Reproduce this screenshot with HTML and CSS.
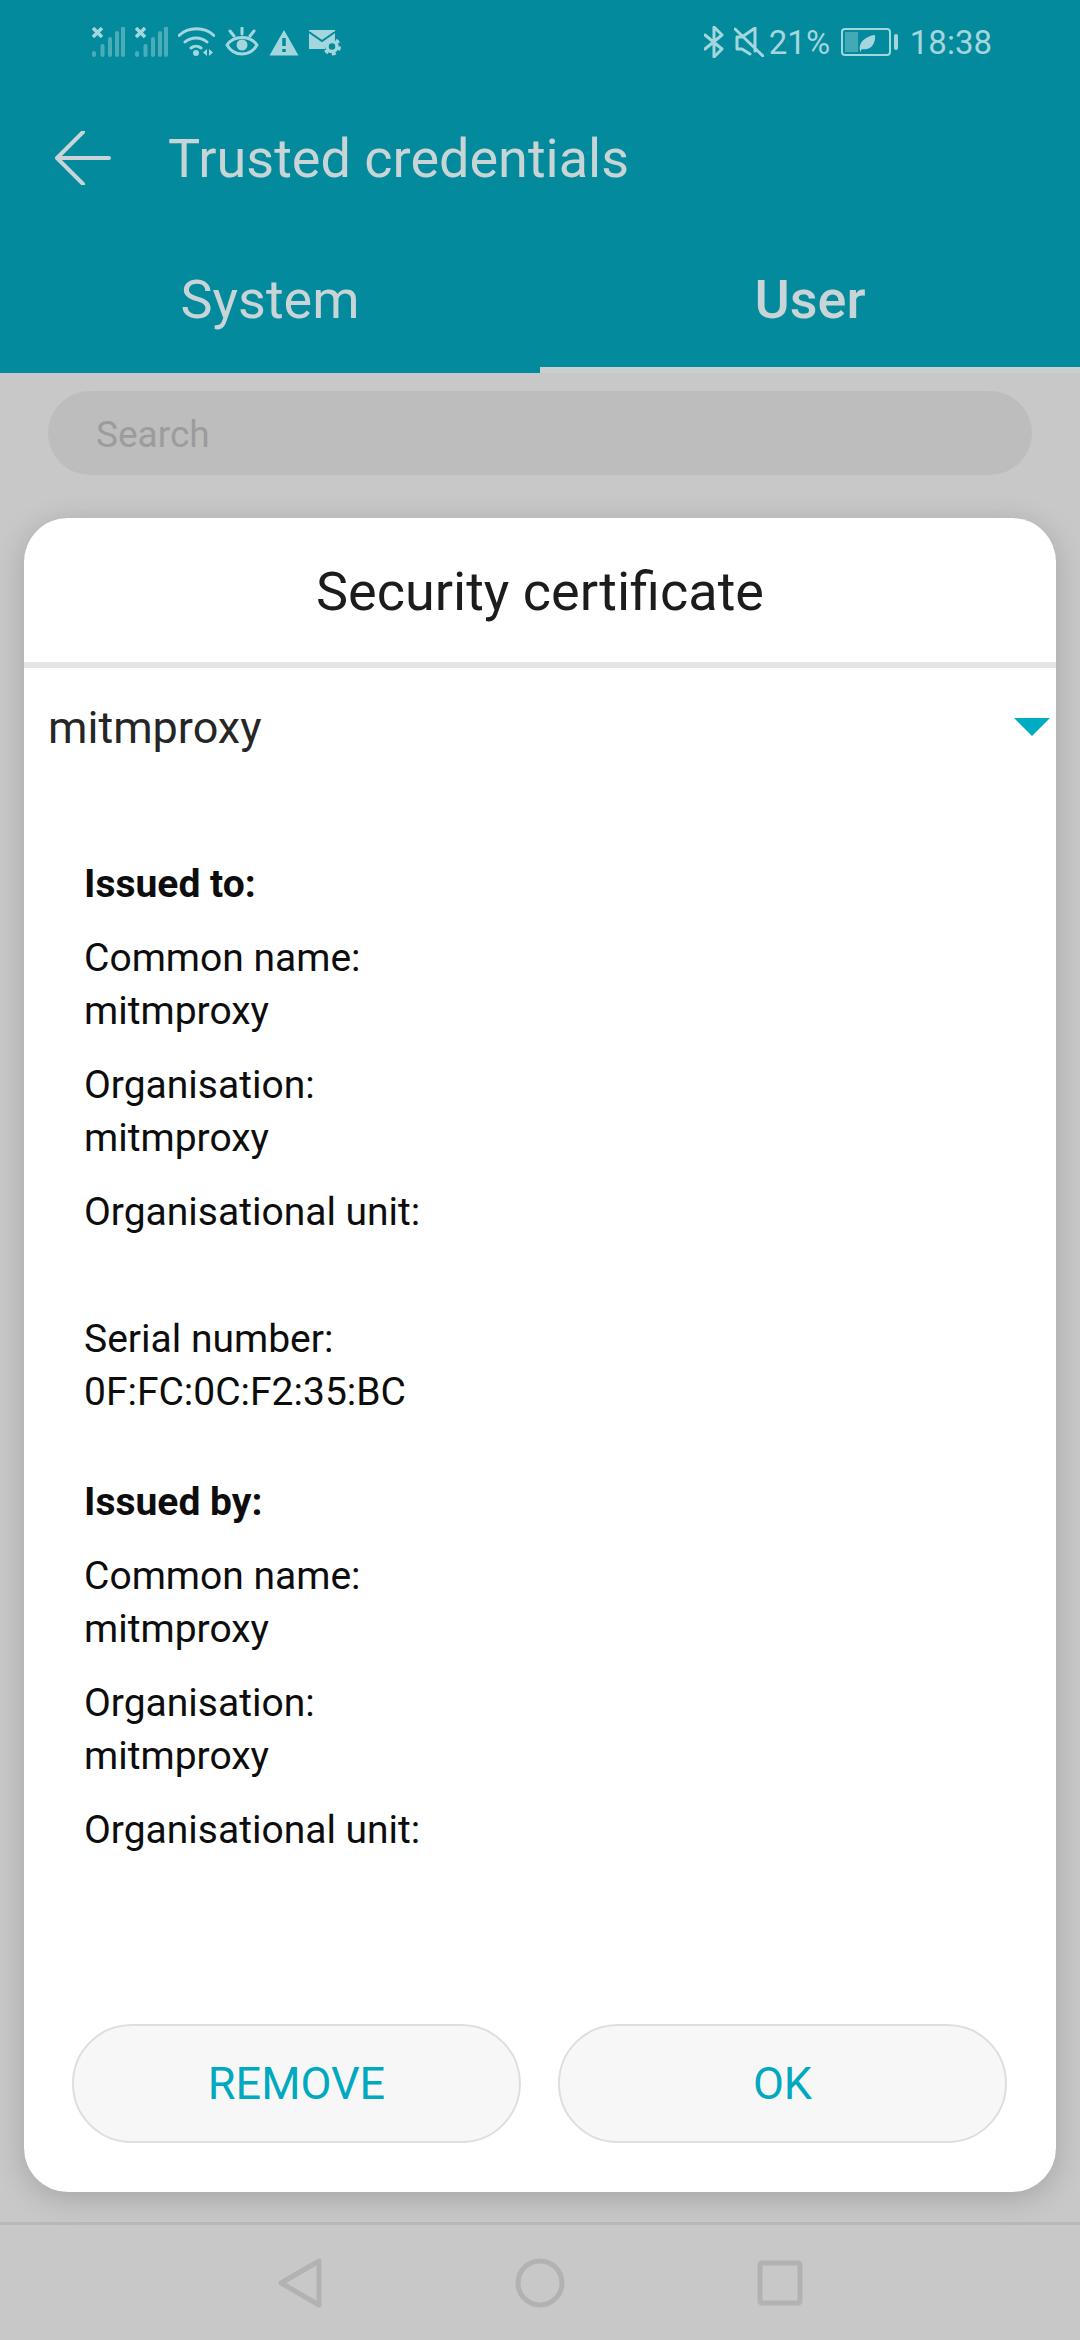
FILE: index.html

```html
<!DOCTYPE html>
<html lang="en">
<head>
    <meta charset="UTF-8">
    <meta name="viewport" content="width=device-width, initial-scale=1.0">
    <title>Trusted credentials</title>
    <link rel="stylesheet" href="styles.css">
</head>
<body>
<div class="page">
    <header class="top">
        <div class="status">
            <div class="status-left">
                <svg class="ic" width="33" height="30" viewBox="0 0 33 30">
                    <path class="x" d="M1 1l9 9M10 1l-9 9"/>
                    <path class="bars" d="M2 26v2M10.500 19v9M18 12v16M25 6v22M31 1v27"/>
                </svg>
                <svg class="ic" width="33" height="30" viewBox="0 0 33 30">
                    <path class="x" d="M1 1l9 9M10 1l-9 9"/>
                    <path class="bars" d="M2 26v2M10.500 19v9M18 12v16M25 6v22M31 1v27"/>
                </svg>
                <svg class="ic wifi" width="37" height="30" viewBox="0 0 37 30">
                    <path class="line" d="M1 8.500C10.500 -0.500 26.500 -0.500 36 8.500M7 15C13 9.500 23 9.500 29 15M13 21C16 18.500 20 18.500 23 21"/>
                    <circle class="fill" cx="18" cy="26" r="3"/>
                    <path class="fill" d="M29 22v7l-4-3.500zM31 22v7l4-3.500z"/>
                </svg>
                <svg class="ic" width="34" height="30" viewBox="0 0 34 30">
                    <path class="line" d="M2 19C9 9 25 9 32 19C25 31 9 31 2 19Z" transform="translate(0 -1)"/>
                    <circle class="fill" cx="17" cy="18" r="5.500"/>
                    <path class="line" d="M17 1v6M5 4l4 5M29 4l-4 5"/>
                </svg>
                <svg class="ic" width="30" height="27" viewBox="0 0 30 27">
                    <path class="fill" d="M15 1L29.500 26.500H0.500Z"/>
                    <path class="cut" d="M15 9v8M15 20v3"/>
                </svg>
                <svg class="ic" width="33" height="27" viewBox="0 0 33 27">
                    <path class="fill" d="M0 1H26V13A9 9 0 0 0 16 20H0Z"/>
                    <path class="cut thin" d="M0 3L13 12L26 3"/>
                    <circle class="gear" cx="23" cy="17.500" r="5"/>
                    <circle class="gear-teeth" cx="23" cy="17.500" r="7.500"/>
                </svg>
            </div>
            <div class="status-right">
                <svg class="ic bt" width="20" height="32" viewBox="0 0 20 32">
                    <path class="line" d="M1 9L18 23L10 31V1L18 9L1 23"/>
                </svg>
                <svg class="ic mute" width="30" height="30" viewBox="0 0 30 30">
                    <path class="line" d="M3 10H8L21 1V24M8 22H3V10M8 22L16 27M1 2L29 29"/>
                </svg>
                <span class="pct">21%</span>
                <svg class="ic batt" width="57" height="28" viewBox="0 0 57 28">
                    <rect class="batt-body" x="1" y="1" width="48" height="26" rx="3"/>
                    <rect class="batt-level" x="4" y="4" width="13" height="20"/>
                    <path class="fill" d="M19 23C17 14 25 8 34 7C35 16 29 23 21 21L19 24Z"/>
                    <rect class="fill" x="53" y="6" width="4" height="16" rx="2"/>
                </svg>
                <span class="clock">18:38</span>
            </div>
        </div>
        <div class="title-bar">
            <svg class="back" width="58" height="54" viewBox="0 0 58 54">
                <path d="M55 27H3M29 1L3 27L29 53" />
            </svg>
            <h1>Trusted credentials</h1>
        </div>
        <div class="tabs">
            <div class="tab">System</div>
            <div class="tab active">User</div>
        </div>
    </header>

    <main class="content">
        <div class="search">Search</div>
    </main>

    <nav class="navbar">
        <svg width="44" height="50" viewBox="0 0 44 50"><path d="M41 3V47L3 25Z"/></svg>
        <svg width="50" height="50" viewBox="0 0 50 50"><circle cx="25" cy="25" r="22"/></svg>
        <svg width="46" height="46" viewBox="0 0 46 46"><rect x="3" y="3" width="40" height="40" rx="2"/></svg>
    </nav>

    <section class="dialog">
        <h2>Security certificate</h2>
        <div class="picker">
            <span>mitmproxy</span>
            <i class="caret"></i>
        </div>
        <div class="details">
            <div class="heading">Issued to:</div>
            <div class="field">Common name:<br>mitmproxy</div>
            <div class="field">Organisation:<br>mitmproxy</div>
            <div class="field">Organisational unit:<br>&nbsp;</div>
            <div class="field">Serial number:<br>0F:FC:0C:F2:35:BC</div>
            <div class="heading second">Issued by:</div>
            <div class="field">Common name:<br>mitmproxy</div>
            <div class="field">Organisation:<br>mitmproxy</div>
            <div class="field">Organisational unit:<br>&nbsp;</div>
        </div>
        <div class="actions">
            <button>REMOVE</button>
            <button>OK</button>
        </div>
    </section>
</div>
</body>
</html>
```

FILE: styles.css

```css
* { box-sizing: border-box; }
html, body { margin: 0; padding: 0; }
body { font-family: Roboto, "Noto Sans", sans-serif; background: #c8c8c8; }

.page { position: relative; width: 1080px; height: 2340px; display: flex; flex-direction: column; overflow: hidden; }

/* header */
.top { height: 373px; background: #038a9c; display: flex; flex-direction: column; }
.status { height: 84px; display: flex; justify-content: space-between; align-items: center; padding: 0 88px 0 92px; color: #a3d6dd; }
.status-left, .status-right { display: flex; align-items: center; }
.status-left { gap: 10px; }
.ic { display: block; fill: none; stroke: none; }
.ic .x { stroke: #a3d6dd; stroke-width: 3.500; }
.ic .bars { stroke: #a3d6dd; stroke-width: 4; stroke-linecap: round; opacity: 0.45; }
.ic .line { stroke: #a3d6dd; stroke-width: 3; stroke-linecap: round; stroke-linejoin: round; }
.ic .fill { fill: #a3d6dd; }
.ic .cut { stroke: #038a9c; stroke-width: 3.500; }
.ic .cut.thin { stroke-width: 2; fill: none; }
.ic .gear { fill: none; stroke: #a3d6dd; stroke-width: 3.500; }
.ic .gear-teeth { fill: none; stroke: #a3d6dd; stroke-width: 3; stroke-dasharray: 4 3.850; }
.batt-body { stroke: #a3d6dd; stroke-width: 2; }
.batt-level { fill: #a3d6dd; opacity: 0.4; }
.bt { margin-right: 10px; }
.mute { margin-right: 5px; }
.pct { font-size: 33px; width: 72px; }
.batt { margin-right: 12px; }
.clock { font-size: 33px; }

.title-bar { height: 148px; display: flex; align-items: center; padding-left: 54px; }
.back { fill: none; stroke: #c8d4d6; stroke-width: 4; stroke-linecap: round; stroke-linejoin: round; margin-right: 56px; }
h1 { margin: 0; font-size: 54px; font-weight: 400; color: #c8d4d6; }

.tabs { flex: 1; display: flex; }
.tab { flex: 1; display: flex; align-items: center; justify-content: center; font-size: 54px; color: #c8d4d6; padding-bottom: 6px; }
.tab.active { font-weight: 500; padding-bottom: 0; border-bottom: 6px solid #c9cfcf; }

/* dimmed page behind the dialog */
.content { flex: 1; padding: 18px 48px 0; }
.search { height: 84px; border-radius: 42px; background: #bdbdbd; padding-left: 48px; font-size: 37px; line-height: 88px; color: #9c9c9c; }

.navbar { height: 118px; border-top: 3px solid #b9b9b9; display: grid; grid-template-columns: repeat(3, 240px); justify-content: center; justify-items: center; align-items: center; }
.navbar svg { fill: none; stroke: #b2b2b2; stroke-width: 5; stroke-linejoin: round; }

/* dialog */
.dialog { position: absolute; left: 24px; top: 518px; width: 1032px; height: 1674px; background: #fff; border-radius: 44px; box-shadow: 0 6px 30px rgba(0, 0, 0, 0.18); display: flex; flex-direction: column; }
h2 { margin: 0; height: 150px; border-bottom: 6px solid #e5e5e5; font-size: 54px; font-weight: 400; line-height: 148px; text-align: center; color: #1c1c1c; }
.picker { height: 118px; display: flex; align-items: center; justify-content: space-between; padding: 0 6px 0 24px; font-size: 45px; color: #262626; }
.caret { width: 0; height: 0; border-left: 18px solid transparent; border-right: 18px solid transparent; border-top: 18px solid #00acc1; }

.details { flex: 1; padding: 72px 60px 0; font-size: 39px; line-height: 53px; color: #0d0d0d; }
.heading { font-weight: 700; }
.heading.second { margin-top: 57px; }
.field { margin-top: 21px; }

.actions { display: flex; justify-content: space-between; padding: 0 49px 49px 48px; }
.actions button { width: 449px; height: 119px; border-radius: 60px; border: 2px solid #dedede; background: #f7f7f7; font-family: inherit; font-size: 45px; color: #00a9c0; }
```
